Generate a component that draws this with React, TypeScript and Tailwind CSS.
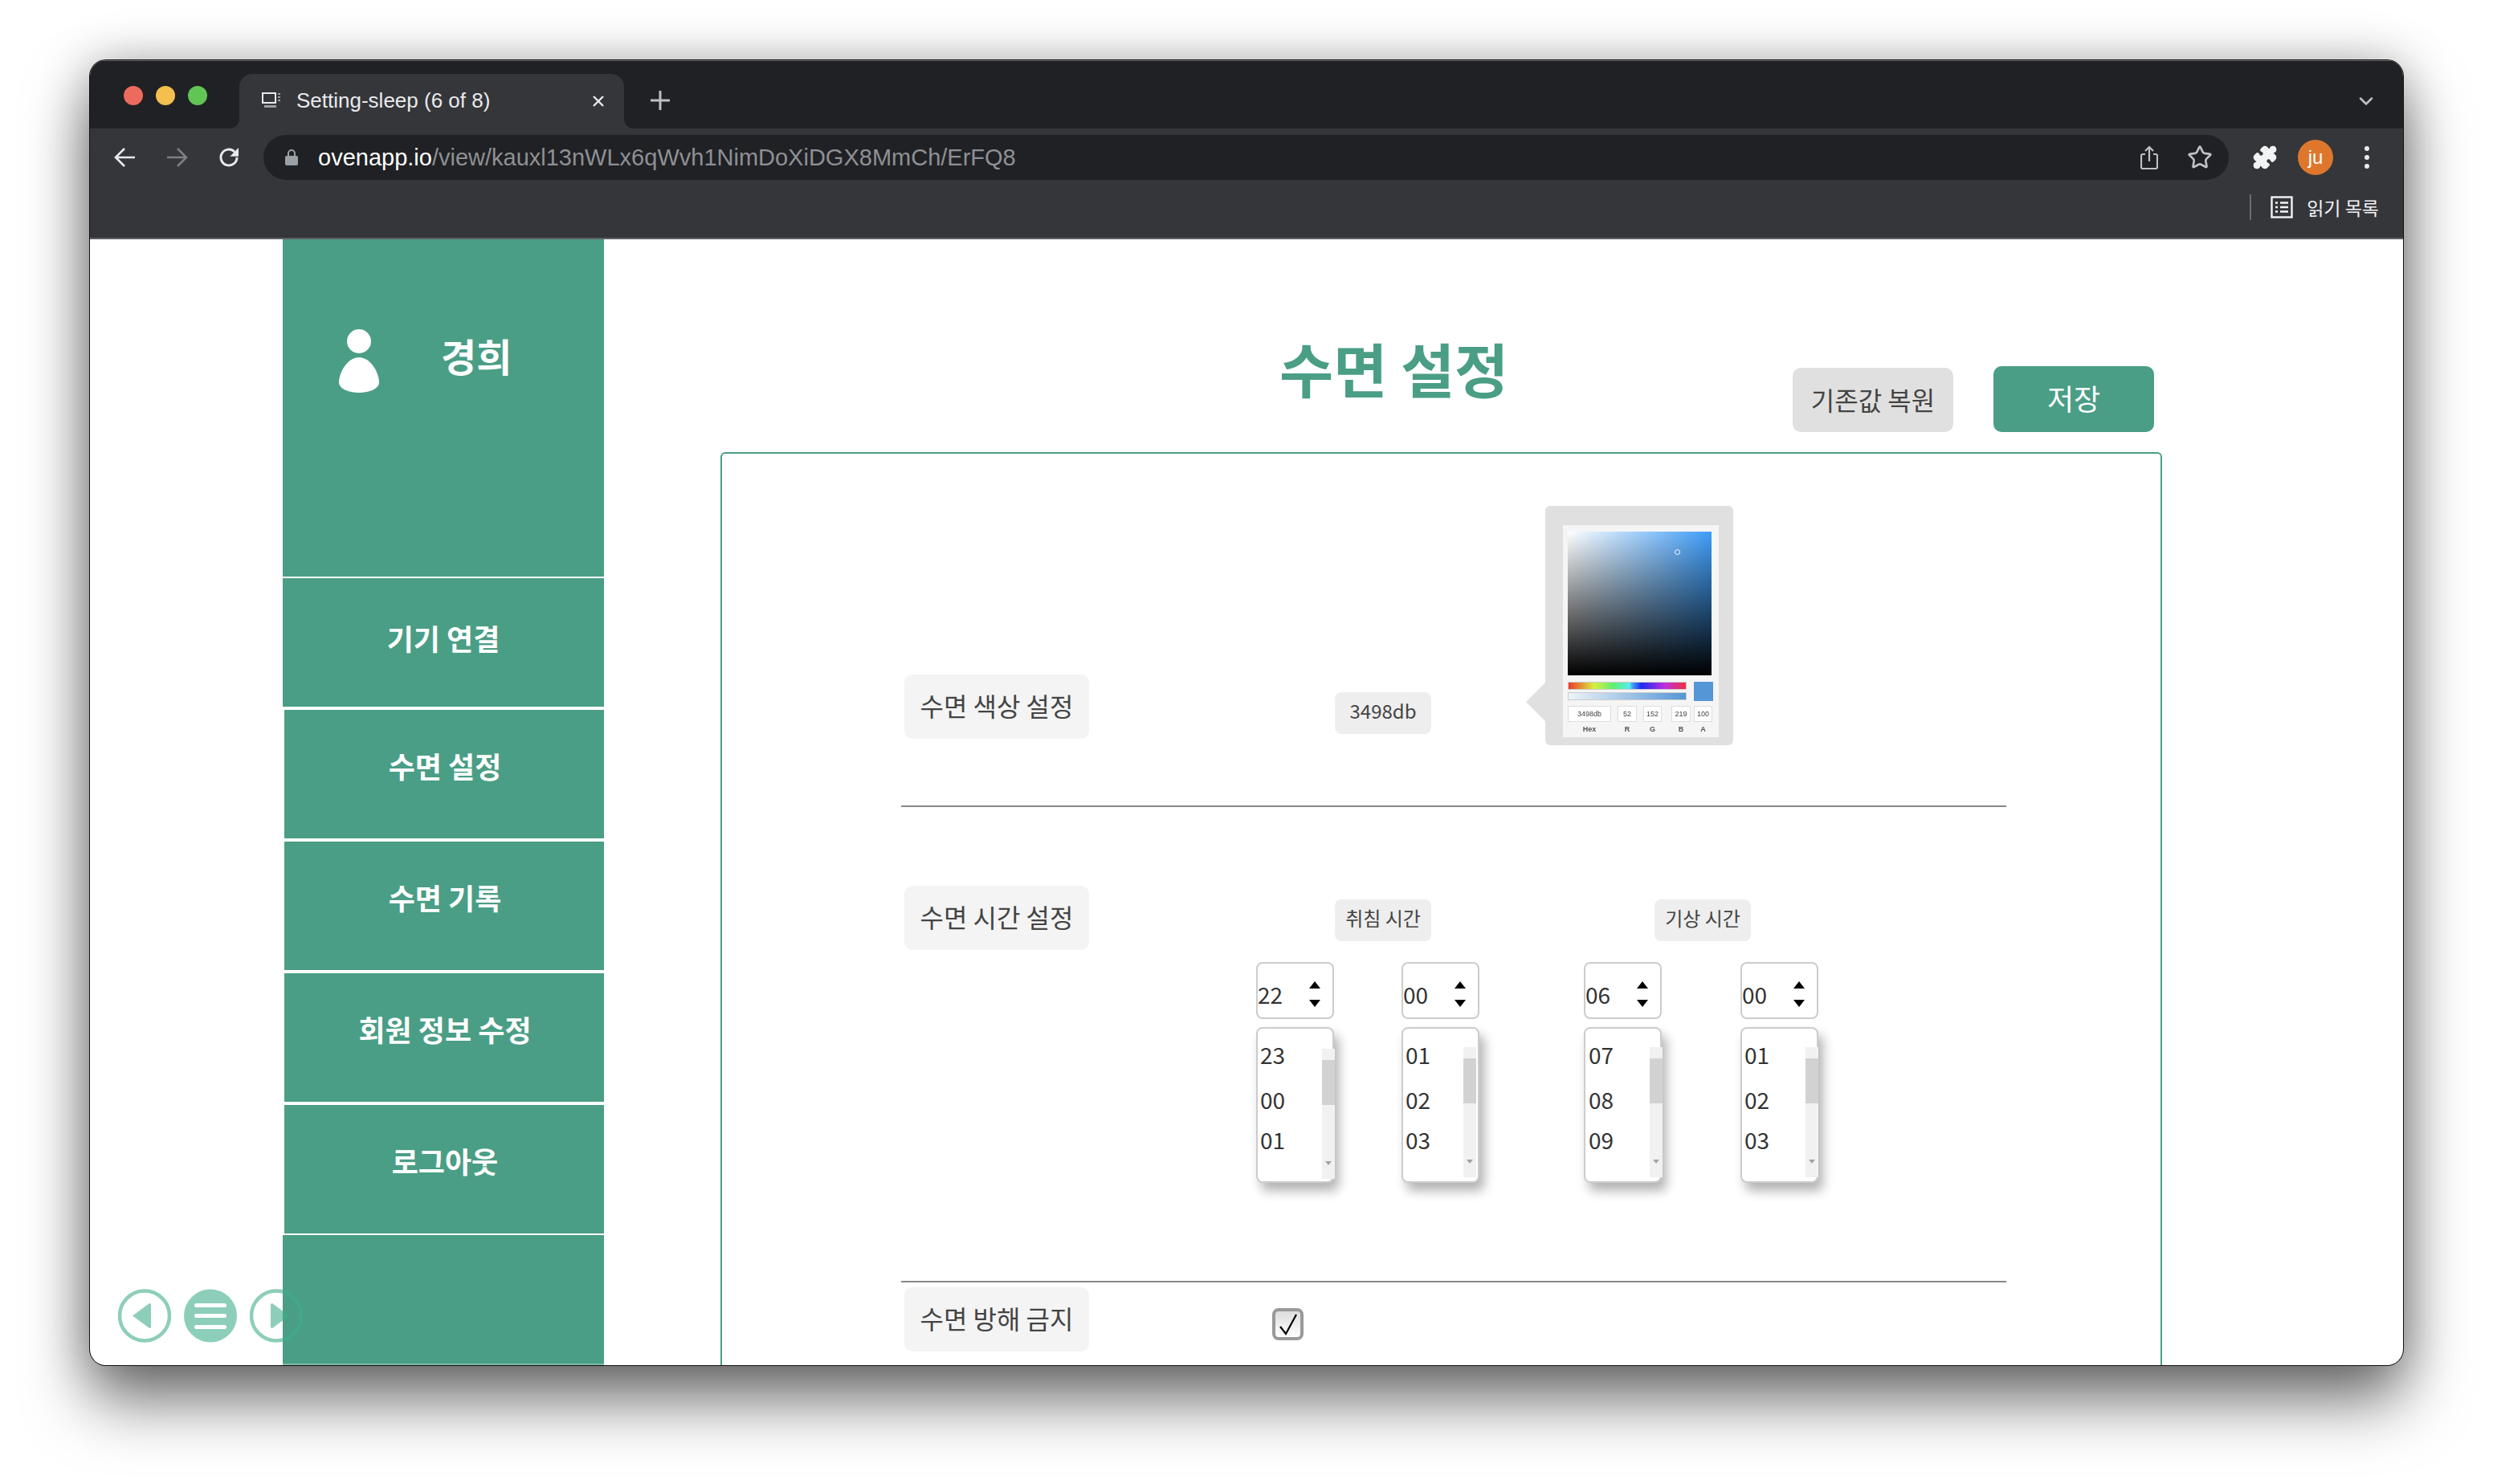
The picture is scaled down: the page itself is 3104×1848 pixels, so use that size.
/** @file Oven prototype of the sleep settings page inside a Chrome window */
import { ChevronDown, Puzzle, Star } from "lucide-react";

const KR = "font-['Noto_Sans_CJK_KR','Noto_Sans',sans-serif]";
const UI = "font-['Liberation_Sans','Noto_Sans_CJK_KR',sans-serif]";

/** Tab strip with traffic lights */
const TabStrip = () => {
  return (
    <div className="h-[85px] bg-[#202124] border-t border-[#6a6a6c] flex shrink-0">
      <div className="flex gap-[16px] pl-[42px] pt-[31px] w-[186px] shrink-0">
        <span className="w-[24px] h-[24px] rounded-full bg-[#ed6a5e]" />
        <span className="w-[24px] h-[24px] rounded-full bg-[#f4bf4f]" />
        <span className="w-[24px] h-[24px] rounded-full bg-[#61c554]" />
      </div>
      <div className="relative mt-[16px] w-[479px] h-[68px] bg-[#35363a] rounded-t-[16px] flex items-center pl-[28px] pb-[2px]">
        <span className="absolute left-[-12px] bottom-0 w-[12px] h-[12px] bg-[radial-gradient(circle_at_0_0,#202124_11.5px,#35363a_12.5px)]" />
        <span className="absolute right-[-12px] bottom-0 w-[12px] h-[12px] bg-[radial-gradient(circle_at_100%_0,#202124_11.5px,#35363a_12.5px)]" />
        <svg width="24" height="20" viewBox="0 0 24 20" fill="none">
          <rect x="1" y="1" width="16" height="12" stroke="#e8eaed" strokeWidth="2" />
          <path d="M20 2h3M20 6h3M20 10h3" stroke="#9aa0a6" strokeWidth="2" />
          <rect x="3" y="16" width="15" height="3" fill="#9aa0a6" />
        </svg>
        <span className={`${UI} ml-[19px] text-[26px] leading-none text-[#e8eaed] whitespace-nowrap`}>
          Setting-sleep (6 of 8)
        </span>
        <svg className="absolute left-[439px] top-[26px]" width="16" height="16" viewBox="0 0 16 16">
          <path d="M2 2l12 12M14 2L2 14" stroke="#e8eaed" strokeWidth="2.4" />
        </svg>
      </div>
      <svg className="ml-[33px] mt-[37px]" width="24" height="24" viewBox="0 0 24 24">
        <path d="M12 0v24M0 12h24" stroke="#bdc1c6" strokeWidth="3" />
      </svg>
      <ChevronDown className="ml-auto mr-[32px] mt-[36px] text-[#bdc1c6]" size={28} strokeWidth={2.2} />
    </div>
  );
};

/** Back, forward, reload, address bar and the extension icons */
const Toolbar = () => {
  return (
    <div className="h-[138px] bg-[#35363a] border-b-2 border-[#5f6064] shrink-0">
      <div className="flex items-center h-[56px] mt-[8px] pl-[30px]">
        <svg width="26" height="26" viewBox="0 0 26 26" fill="none" stroke="#e8eaed" strokeWidth="2.6">
          <path d="M26 13H2M13 2L2 13l11 11" />
        </svg>
        <svg className="ml-[40px]" width="26" height="26" viewBox="0 0 26 26" fill="none" stroke="#7d7f83" strokeWidth="2.6">
          <path d="M0 13h24M13 2l11 11-11 11" />
        </svg>
        <svg className="ml-[35px]" width="32" height="32" viewBox="0 0 24 24" fill="none">
          <path d="M19.5 12a7.5 7.5 0 1 1-2.2-5.3" stroke="#e8eaed" strokeWidth="2.2" />
          <path d="M21 3v8h-8z" fill="#e8eaed" />
        </svg>
        <div className="ml-[27px] w-[2447px] h-[56px] rounded-full bg-[#202124] flex items-center pl-[27px] pr-[20px]">
          <svg width="16" height="20" viewBox="0 0 16 20" fill="none">
            <path d="M4 9V5a4 4 0 0 1 8 0v4" stroke="#9aa0a6" strokeWidth="2" />
            <rect x="0" y="8" width="16" height="12" rx="2" fill="#9aa0a6" />
          </svg>
          <span className={`${UI} ml-[25px] text-[29px] leading-none whitespace-nowrap text-[#8e9094]`}>
            <span className="text-white">ovenapp.io</span>/view/kauxl13nWLx6qWvh1NimDoXiDGX8MmCh/ErFQ8
          </span>
          <svg className="ml-auto" width="22" height="30" viewBox="0 0 22 30" fill="none" stroke="#bdc1c6" strokeWidth="2.2">
            <path d="M6 11H3a2 2 0 0 0-2 2v14a2 2 0 0 0 2 2h16a2 2 0 0 0 2-2V13a2 2 0 0 0-2-2h-3M11 20V2M6 7l5-5 5 5" />
          </svg>
          <Star className="ml-[36px] text-[#bdc1c6]" size={32} strokeWidth={2} />
        </div>
        <Puzzle className="ml-[29px] text-[#f1f3f4]" size={32} fill="#f1f3f4" strokeWidth={1.5} />
        <div className={`${UI} ml-[25px] w-[44px] h-[44px] rounded-full bg-[#de772c] text-white text-[24px] flex items-center justify-center`}>
          ju
        </div>
        <svg className="ml-[39px]" width="6" height="30" viewBox="0 0 6 30" fill="#e8eaed">
          <circle cx="3" cy="4" r="3" />
          <circle cx="3" cy="15" r="3" />
          <circle cx="3" cy="26" r="3" />
        </svg>
      </div>
      <div className="flex justify-end items-center h-[32px] mt-[18px] pr-[30px]">
        <span className="w-[2px] h-[32px] bg-[#6a6c70]" />
        <svg className="ml-[24px]" width="28" height="28" viewBox="0 0 28 28" fill="none" stroke="#f1f3f4" strokeWidth="2.4">
          <rect x="1.5" y="1.5" width="25" height="25" />
          <path d="M6 8.5h3M12 8.5h10M6 14h3M12 14h10M6 19.5h3M12 19.5h10" />
        </svg>
        <span className={`${KR} ml-[17px] text-[23px] leading-none text-[#f1f3f4]`}>읽기 목록</span>
      </div>
    </div>
  );
};

/** Left menu */
const Sidebar = () => {
  const items = [
    { label: "기기 연결", className: "mt-[2px] pt-[51px]" },
    { label: "수면 설정", className: "mt-[4px] ml-[2px] pl-[2px] pt-[46px]" },
    { label: "수면 기록", className: "mt-[4px] ml-[2px] pl-[2px] pt-[46px]" },
    { label: "회원 정보 수정", className: "mt-[4px] ml-[2px] pl-[2px] pt-[46px]" },
    { label: "로그아웃", className: "mt-[4px] ml-[2px] pl-[2px] pt-[46px]" },
  ];
  return (
    <div className="ml-[241px] w-[400px] h-[1402px] shrink-0 flex flex-col">
      <div className="h-[420px] bg-[#4a9e85] flex items-start">
        <svg className="ml-[70px] mt-[112px]" width="50" height="79" viewBox="0 0 50 79" fill="#fff">
          <circle cx="25" cy="15" r="15" />
          <path d="M25 35C40 35 50 55 50 66C50 75 36 79 25 79C14 79 0 75 0 66C0 55 10 35 25 35Z" />
        </svg>
        <span className={`${KR} ml-[77px] mt-[120px] text-[48px] leading-[48px] font-bold text-white`}>경희</span>
      </div>
      {items.map((item) => (
        <div
          key={item.label}
          className={`${KR} ${item.className} h-[160px] bg-[#4a9e85] text-center text-[36px] leading-[46px] font-bold text-white`}
        >
          {item.label}
        </div>
      ))}
      <div className="mt-[2px] flex-1 bg-[#4a9e85] border-b-2 border-[#7fb8a6]" />
    </div>
  );
};

/** Prev, menu, next bubbles that float over the page */
const FloatingNav = () => {
  return (
    <div className="absolute left-[36px] top-[1307px] flex gap-[16px]">
      <svg width="66" height="67" viewBox="0 0 66 67">
        <circle cx="33" cy="33.5" r="31" fill="none" stroke="#3fad8c" strokeOpacity="0.6" strokeWidth="4.5" />
        <path d="M18 33.5L39 18a2 2 0 0 1 2 2v27a2 2 0 0 1-2 2z" fill="#3fad8c" fillOpacity="0.6" />
      </svg>
      <svg width="66" height="67" viewBox="0 0 66 67">
        <circle cx="33" cy="33.5" r="33" fill="#3fad8c" fillOpacity="0.6" />
        <rect x="13" y="18" width="40" height="5" rx="2.5" fill="#fff" />
        <rect x="13" y="31" width="40" height="5" rx="2.5" fill="#fff" />
        <rect x="13" y="45" width="40" height="5" rx="2.5" fill="#fff" />
      </svg>
      <svg width="66" height="67" viewBox="0 0 66 67">
        <circle cx="33" cy="33.5" r="31" fill="none" stroke="#3fad8c" strokeOpacity="0.6" strokeWidth="4.5" />
        <path d="M49 33.5L28 18a2 2 0 0 0-2 2v27a2 2 0 0 0 2 2z" fill="#3fad8c" fillOpacity="0.6" />
      </svg>
    </div>
  );
};

const RowLabel = ({ text, className }: { text: string; className: string }) => {
  return (
    <div className={`${KR} ${className} w-[230px] h-[80px] shrink-0 rounded-[10px] bg-[#f4f4f4] pb-[5px] text-[32px] text-[#444] flex items-center justify-center`}>
      {text}
    </div>
  );
};

const Chip = ({ text, className }: { text: string; className: string }) => {
  return (
    <div className={`${KR} ${className} w-[120px] h-[52px] shrink-0 rounded-[8px] bg-[#eeeeee] pb-[6px] text-[24px] text-[#444] flex items-center justify-center`}>
      {text}
    </div>
  );
};

/** The colour picker, a small pale picture in the reference */
const ColorPicker = () => {
  const fields = [
    { label: "Hex", value: "3498db", className: "w-[54px]", gap: "" },
    { label: "R", value: "52", className: "w-[24px]", gap: "ml-[8px]" },
    { label: "G", value: "152", className: "w-[23px]", gap: "ml-[8px]" },
    { label: "B", value: "219", className: "w-[24px]", gap: "ml-[12px]" },
    { label: "A", value: "100", className: "w-[23px]", gap: "ml-[4px]" },
  ];
  return (
    <div className="relative ml-[142px] mt-[65px] w-[234px] h-[298px] shrink-0 rounded-[6px] bg-[#e0e0e0] pl-[22px] pt-[24px]">
      <span className="absolute left-[-24px] top-[220px] w-[24px] h-[48px] bg-[#e0e0e0] [clip-path:polygon(100%_0,0_50%,100%_100%)]" />
      <div className={`${UI} w-[194px] h-[264px] bg-[#f5f5f5] pl-[6px] pt-[8px] blur-[0.4px]`}>
        <div className="relative w-[179px] h-[179px] bg-[linear-gradient(to_bottom,transparent,#000),linear-gradient(to_right,#fff,#3d9cf7)]">
          <span className="absolute left-[133px] top-[22px] w-[7px] h-[7px] rounded-full border border-white" />
        </div>
        <div className="flex mt-[8px]">
          <div className="w-[148px]">
            <div className="h-[10px] bg-[linear-gradient(to_right,#ee3a2a,#d8f040_22%,#60ee70_38%,#55eeee_52%,#4aa8f0_54%,#1a2cf0_62%,#c030e0_82%,#ee3040)] border border-[#ccc]" />
            <div className="h-[10px] mt-[3px] bg-[linear-gradient(to_right,#eef3f8,#5596d6)] border border-[#ccc]" />
          </div>
          <div className="ml-[9px] w-[24px] h-[24px] bg-[#5596d6]" />
        </div>
        <div className="flex mt-[6px]">
          {fields.map((field) => (
            <div key={field.label} className={`${field.gap} ${field.className} text-center`}>
              <div className="h-[20px] bg-white border border-[#ddd] text-[9px] leading-[18px] text-[#444]">{field.value}</div>
              <div className="mt-[2px] text-[9px] leading-[14px] font-bold text-[#555]">{field.label}</div>
            </div>
          ))}
        </div>
      </div>
    </div>
  );
};

/** Number input with its open option list */
const TimeSelect = ({
  value,
  options,
  textClass,
  barClass,
}: {
  value: string;
  options: string[];
  textClass: string;
  barClass: string;
}) => {
  const heights = ["h-[56px]", "h-[56px]", "h-[44px]"];
  return (
    <div className={`${KR} w-[97px] shrink-0 text-[28px] text-[#333]`}>
      <div className="relative h-[71px] rounded-[8px] border-2 border-[#ccc] bg-white pt-[14px]">
        <span className="block leading-[48px]">{value}</span>
        <svg className="absolute left-[63px] top-[22px]" width="16" height="32" viewBox="0 0 16 32" fill="#000">
          <path d="M8 0l7 9H1zM8 32l-7-9h14z" />
        </svg>
      </div>
      <div className="relative mt-[10px] h-[194px] rounded-[8px] border-2 border-[#ccc] bg-white shadow-[6px_10px_14px_rgba(0,0,0,0.3)] pt-[4px]">
        {options.map((option, i) => (
          <div key={option} className={`${heights[i]} ${textClass} flex items-center`}>
            {option}
          </div>
        ))}
        <div className={`${barClass} absolute w-[16px] h-[162px] bg-[#f1f1f1]`}>
          <div className="mt-[14px] h-[56px] bg-[#d2d2d2]" />
          <span className="absolute left-[4px] bottom-[17px] border-x-[4px] border-t-[5px] border-x-transparent border-t-[#a3a3a3]" />
        </div>
      </div>
    </div>
  );
};

/** Settings card, it runs on below the fold */
const Panel = () => {
  return (
    <div className="h-[1240px] border-2 border-[#4a9e85] rounded-[6px] pl-[223px]">
      <div className="w-[1376px]">
        <div className="h-[438px] flex items-start pl-[4px]">
          <RowLabel text="수면 색상 설정" className="mt-[275px]" />
          <Chip text="3498db" className="ml-[306px] mt-[297px]" />
          <ColorPicker />
        </div>
        <div className="h-[2px] bg-[#888]" />
        <div className="h-[590px] flex items-start pl-[4px]">
          <RowLabel text="수면 시간 설정" className="mt-[98px]" />
          <div className="ml-[208px] mt-[115px] w-[278px] shrink-0">
            <Chip text="취침 시간" className="ml-[98px]" />
            <div className="flex gap-[84px] mt-[26px]">
              <TimeSelect value="22" options={["23", "00", "01"]} textClass="pl-[3px]" barClass="left-[80px] top-[25px]" />
              <TimeSelect value="00" options={["01", "02", "03"]} textClass="pl-[3px]" barClass="left-[75px] top-[23px]" />
            </div>
          </div>
          <div className="ml-[130px] mt-[115px] w-[292px] shrink-0">
            <Chip text="기상 시간" className="ml-[88px]" />
            <div className="flex gap-[98px] mt-[26px]">
              <TimeSelect value="06" options={["07", "08", "09"]} textClass="pl-[4px]" barClass="left-[80px] top-[23px]" />
              <TimeSelect value="00" options={["01", "02", "03"]} textClass="pl-[3px]" barClass="left-[79px] top-[23px]" />
            </div>
          </div>
        </div>
        <div className="h-[2px] bg-[#888]" />
        <div className="flex items-start pl-[4px]">
          <RowLabel text="수면 방해 금지" className="mt-[6px]" />
          <div className="ml-[228px] mt-[32px] w-[39px] h-[40px] rounded-[8px] border-4 border-[#999] bg-[linear-gradient(to_bottom,#dcdcdc,#fff)] flex items-center justify-center">
            <svg width="24" height="28" viewBox="0 0 24 28" fill="none" stroke="#000" strokeWidth="2.2">
              <path d="M2 17l7 9L22 2" />
            </svg>
          </div>
        </div>
      </div>
    </div>
  );
};

const App = () => {
  return (
    <div className="w-[3104px] h-[1848px] bg-white pl-[112px] pt-[75px] overflow-hidden">
      <div className="w-[2880px] h-[1625px] rounded-[20px] overflow-hidden flex flex-col bg-white shadow-[0_0_0_1px_#111,0_44px_80px_rgba(0,0,0,0.55),0_0_60px_rgba(0,0,0,0.25)]">
        <TabStrip />
        <Toolbar />
        <div className="relative flex flex-1 min-h-0 overflow-hidden -ml-px">
          <Sidebar />
          <div className="ml-[145px] w-[1795px] shrink-0">
            <div className="h-[265px] flex items-start">
              <h1 className={`${KR} ml-[696px] mt-[123px] text-[73px] leading-[72px] font-bold text-[#4a9e85] whitespace-nowrap`}>
                수면 설정
              </h1>
              <div className="ml-auto mr-[10px] mt-[158px] flex items-end gap-[50px]">
                <button className={`${KR} w-[200px] h-[80px] rounded-[10px] bg-[#e0e0e0] pb-[3px] text-[32px] text-[#444]`}>기존값 복원</button>
                <button className={`${KR} w-[200px] h-[82px] rounded-[10px] bg-[#4a9e85] pb-[4px] text-[36px] text-white`}>저장</button>
              </div>
            </div>
            <Panel />
          </div>
          <FloatingNav />
        </div>
      </div>
    </div>
  );
};

export default App;
